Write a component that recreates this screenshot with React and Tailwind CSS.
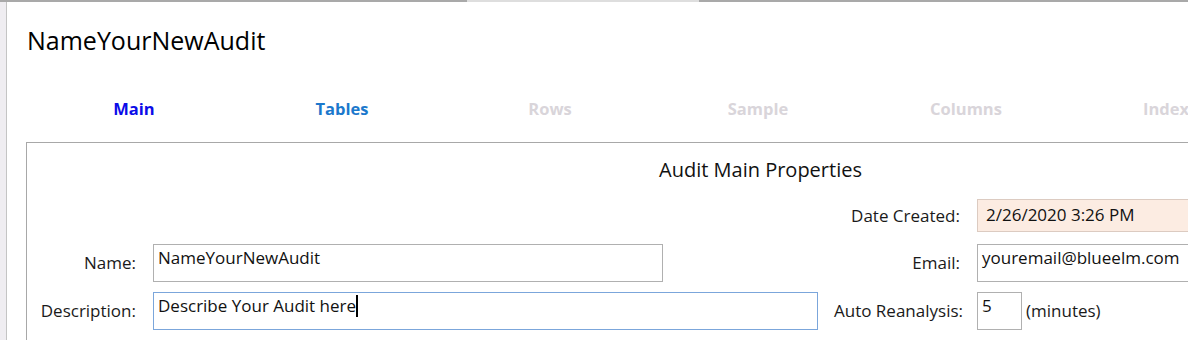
const tabs = [
  { label: "Main", cls: "w-[208px] text-[#0c0ce8]" },
  { label: "Tables", cls: "w-[208px] text-[#1b78cc]" },
  { label: "Rows", cls: "w-[208px] text-[#d9d5da]" },
  { label: "Sample", cls: "w-[208px] text-[#d9d5da]" },
  { label: "Columns", cls: "w-[208px] text-[#d9d5da]" },
  { label: "Index", cls: "w-[192px] text-[#d9d5da]" },
];

const Label = ({ w, children }) => (
  <div className={`${w} shrink-0 text-right text-[17px] text-[#1a1a1a]`}>{children}</div>
);

const Field = ({ w, h = "h-[38px]", className = "border-[#b0b0b0] bg-white", children }) => (
  <div className={`${w} ${h} shrink-0 border ${className} px-[4px] pt-[1px] text-[17px] text-[#111] leading-[24px] whitespace-nowrap overflow-hidden`}>
    {children}
  </div>
);

export default function App() {
  return (
    <div
      className="w-[1188px] h-[340px] overflow-hidden bg-white flex flex-col"
      style={{ fontFamily: '"Open Sans", "Noto Sans", sans-serif' }}
    >
      {/* top edge */}
      <div className="flex h-[2px] shrink-0">
        <div className="w-[467px] bg-[#a9a9a9]" />
        <div className="w-[232px] bg-[#dedede]" />
        <div className="flex-1 bg-[#a9a9a9]" />
      </div>

      <div className="flex flex-1 min-h-0">
        <div className="w-[7px] shrink-0 bg-[#efedf1] border-r border-[#c4c4c4]" />

        <div className="flex-1 min-w-0 flex flex-col">
          <h1 className="pl-[20px] pt-[21px] h-[70px] text-[25px] leading-[34px] text-black">
            NameYourNewAudit
          </h1>

          <nav className="flex pl-[23px] h-[70px] items-start pt-[25px]">
            {tabs.map((t) => (
              <div
                key={t.label}
                className={`shrink-0 text-center font-bold text-[16.5px] leading-[24px] whitespace-nowrap ${t.cls}`}
              >
                {t.label}
              </div>
            ))}
          </nav>

          <section className="ml-[19px] w-[1468px] flex-1 border-l border-t border-[#a8a8a8]">
            <div className="text-center text-[20px] leading-[28px] text-[#111] pt-[13px]">
              Audit Main Properties
            </div>

            <div className="flex items-center mt-[15px]">
              <Label w="w-[933px]">Date Created:</Label>
              <Field
                w="w-[260px] ml-[17px]"
                h="h-[33px]"
                className="border-[#dccbc1] bg-[#fcece2] !pt-[3px] pl-[8px]"
              >
                2/26/2020 3:26 PM
              </Field>
            </div>

            <div className="flex items-center mt-[12px]">
              <Label w="w-[109px]">Name:</Label>
              <Field w="w-[510px] ml-[17px]">NameYourNewAudit</Field>
              <Label w="w-[297px]">Email:</Label>
              <Field w="w-[260px] ml-[17px]">youremail@blueelm.com</Field>
            </div>

            <div className="flex items-center mt-[10px]">
              <Label w="w-[109px]">Description:</Label>
              <Field w="w-[665px] ml-[17px]" className="border-[#7ba6db] bg-white">
                <span>Describe Your Audit here</span>
                <span className="inline-block w-[2px] h-[22px] bg-black align-[-5px]" />
              </Field>
              <Label w="w-[145px]">Auto Reanalysis:</Label>
              <Field w="w-[45px] ml-[14px]">5</Field>
              <div className="ml-[4px] text-[17px] text-[#1a1a1a]">(minutes)</div>
            </div>
          </section>
        </div>
      </div>
    </div>
  );
}
